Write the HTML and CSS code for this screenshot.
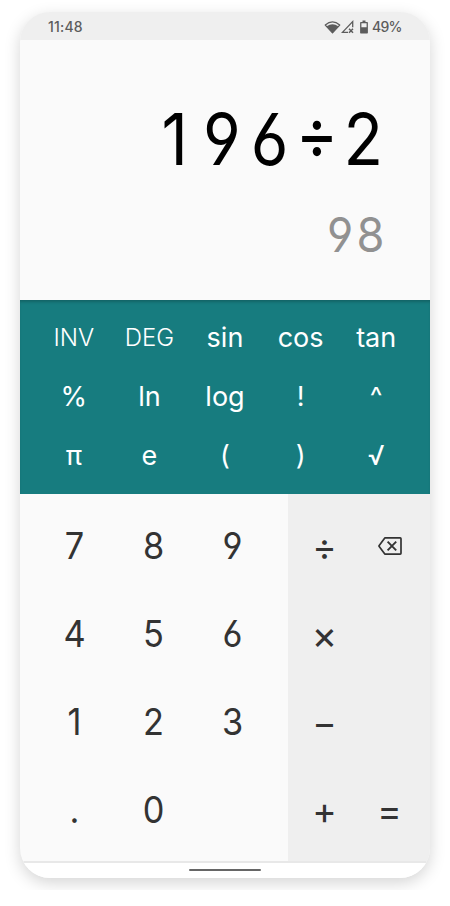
FILE: index.html
```html
<!DOCTYPE html>
<html lang="en">
<head>
<meta charset="utf-8">
<title>Calculator</title>
<link rel="stylesheet" href="styles.css">
</head>
<body>
<main class="phone">
  <header class="status">
    <span class="time">11:48</span>
    <span class="indicators">
      <svg class="wifi" width="17" height="14" viewBox="0 0 16 13.200"><path d="M1.200 4.800Q8 -1.200 14.800 4.800L8 12.200Z" fill="none" stroke="currentColor" stroke-width="1.200" stroke-linejoin="round"/><path d="M2.500 6Q8 1.800 13.500 6L8 12.200Z" fill="currentColor"/></svg>
      <svg class="signal" width="13" height="14" viewBox="0 0 13 14"><path d="M7 12.400H1.400L11.700 1.600V7.300" fill="none" stroke="currentColor" stroke-width="1.300"/><path d="M8 8.700L12 12.700M12 8.700L8 12.700" stroke="currentColor" stroke-width="1.500"/></svg>
      <svg class="battery" width="8" height="14" viewBox="0 0 8 14"><path d="M2.500 0.600H5.500V2H7.200Q7.900 2 7.900 2.700V12.700Q7.900 13.400 7.200 13.400H0.800Q0.100 13.400 0.100 12.700V2.700Q0.100 2 0.800 2H2.500ZM1.400 3.300V7.200H6.600V3.300Z" fill="currentColor" fill-rule="evenodd"/></svg>
      <span class="percent">49%</span>
    </span>
  </header>
  <section class="display">
    <div class="expression"><span class="one">1</span><span class="nine">9</span>6<span class="sign">÷</span>2</div>
    <div class="result">98</div>
  </section>
  <section class="functions">
    <button class="mode">INV</button><button class="mode">DEG</button><button>sin</button><button>cos</button><button>tan</button>
    <button>%</button><button>ln</button><button>log</button><button>!</button><button>^</button>
    <button>π</button><button>e</button><button>(</button><button>)</button><button>√</button>
  </section>
  <section class="keypad">
    <div class="digits">
      <button>7</button><button>8</button><button>9</button>
      <button>4</button><button>5</button><button>6</button>
      <button>1</button><button>2</button><button>3</button>
      <button>.</button><button>0</button>
    </div>
    <div class="operators">
      <button>÷</button>
      <button class="delete" aria-label="Delete"><svg width="24" height="18" viewBox="0 0 24 18"><path d="M6.800 0.900H22.200Q23 0.900 23 1.700V16.300Q23 17.100 22.200 17.100H6.800L1.200 9.600Q0.800 9 1.200 8.400Z" fill="none" stroke="currentColor" stroke-width="1.700" stroke-linejoin="round"/><path d="M9.600 4.600L18.200 13.400M18.200 4.600L9.600 13.400" stroke="currentColor" stroke-width="1.900"/></svg></button>
      <button class="times">×</button><span></span>
      <button>−</button><span></span>
      <button>+</button><button>=</button>
    </div>
  </section>
  <footer class="nav"><span class="handle"></span></footer>
</main>
</body>
</html>
```

FILE: styles.css
```css
* {
  box-sizing: border-box;
}

body {
  margin: 0;
  padding: 12px 20px;
  background: #fff;
  font-family: Inter, sans-serif;
}

.phone {
  display: flex;
  flex-direction: column;
  width: 410px;
  height: 865.5px;
  border-radius: 30px;
  overflow: hidden;
  background: #fafafa;
  box-shadow: 0 5px 16px rgba(0, 0, 0, 0.17);
}

.status {
  display: flex;
  justify-content: space-between;
  align-items: center;
  height: 28px;
  padding: 1px 28px 0;
  background: #efefef;
  color: #5c5c5c;
  font-size: 14px;
  font-weight: 450;
}

.time {
  letter-spacing: 0.2px;
}

.indicators {
  display: flex;
  align-items: center;
}

.battery {
  margin: 0 4px 0 6px;
}

.percent {
  width: 30px;
  letter-spacing: -0.7px;
}

.display {
  display: flex;
  flex-direction: column;
  align-items: flex-end;
  height: 259.5px;
  padding: 55px 40px 0 0;
}

.expression,
.result,
.digits button {
  font-feature-settings: "cv03", "cv04";
}

.expression,
.result {
  transform: scaleX(0.9);
  transform-origin: right;
}

.expression {
  font-size: 72px;
  line-height: 88px;
  letter-spacing: 8px;
}

.one {
  letter-spacing: 17px;
}

.nine {
  letter-spacing: 11px;
}

.sign {
  display: inline-block;
  letter-spacing: 5.5px;
  transform: translateY(-6px);
}

.result {
  margin-top: 23px;
  padding-right: 2.5px;
  transform: scaleX(0.94);
  color: #919191;
  font-size: 48px;
  line-height: 58px;
  letter-spacing: 3.5px;
}

button {
  display: flex;
  align-items: center;
  justify-content: center;
  padding: 0;
  border: 0;
  background: none;
  color: inherit;
  font: inherit;
}

.functions {
  display: grid;
  grid-template-columns: repeat(5, 1fr);
  grid-auto-rows: 59.2px;
  height: 194px;
  padding: 8.5px 16px;
  background: #177c7f;
  box-shadow: inset 0 3px 3px -1px rgba(0, 0, 0, 0.2);
  color: #fff;
  font-size: 27px;
}

.functions .mode {
  font-size: 24px;
  font-weight: 350;
}

.keypad {
  display: flex;
  height: 367.5px;
}

.digits {
  display: grid;
  grid-template-columns: repeat(3, 79px);
  grid-auto-rows: 88px;
  width: 268px;
  padding: 8px 0 0 15px;
  color: #333;
  font-size: 36.5px;
}

.digits button {
  transform: scaleX(0.94);
}

.operators {
  display: grid;
  grid-template-columns: repeat(2, 65px);
  grid-auto-rows: 88px;
  width: 142px;
  padding: 9px 0 0 4px;
  background: #efefef;
  color: #333;
  font-size: 37px;
  font-weight: 420;
}

.operators .times {
  padding-bottom: 1px;
  font-size: 39px;
}

.operators .delete {
  padding-bottom: 2px;
}

.nav {
  display: flex;
  justify-content: center;
  height: 16.5px;
  padding-top: 6px;
  border-top: 2px solid #e8e8e8;
  background: #fff;
}

.handle {
  width: 72px;
  height: 2px;
  border-radius: 1px;
  background: #666;
}
```
